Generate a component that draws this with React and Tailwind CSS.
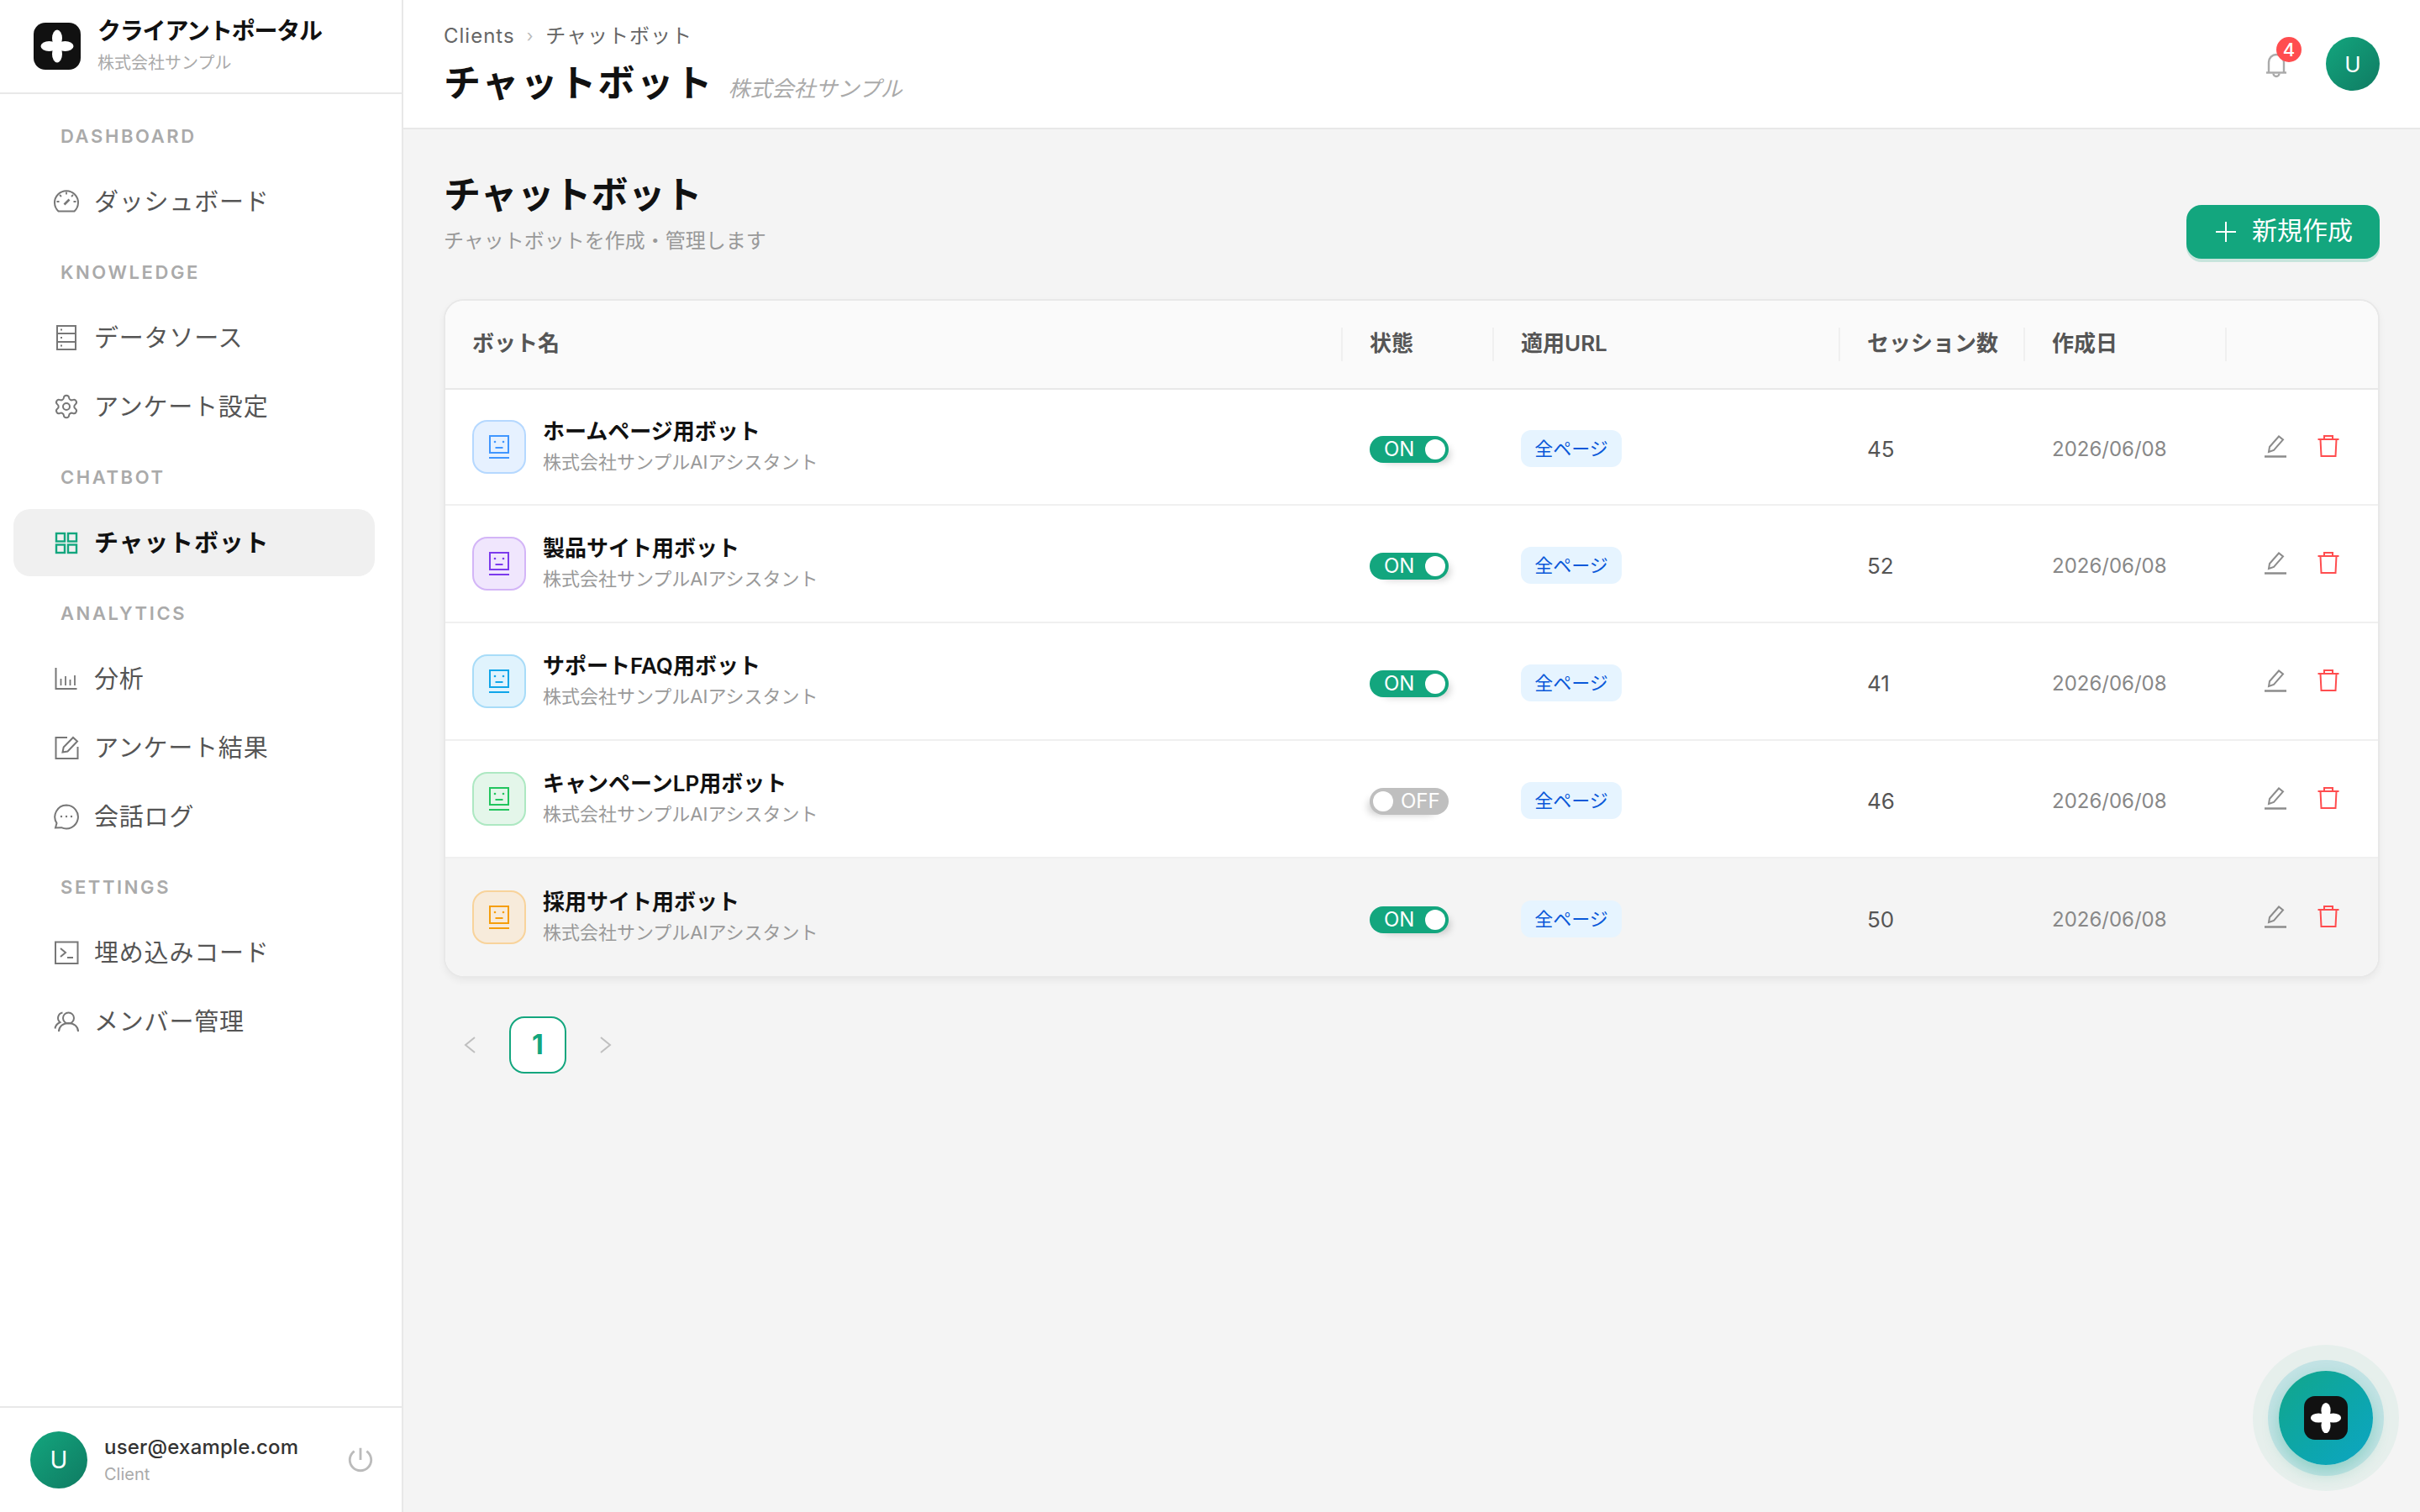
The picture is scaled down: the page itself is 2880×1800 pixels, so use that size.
import React from 'react';
import { Settings } from 'lucide-react';
import { RiShutDownLine } from 'react-icons/ri';

const Logo = ({ size = 56 }) => (
	<div
		className={`flex items-center justify-center bg-[#111111] ${size === 56 ? 'w-[56px] h-[56px] rounded-[14px]' : 'w-[52px] h-[52px] rounded-[13px]'}`}
	>
		<svg viewBox="0 0 56 56" className="w-full h-full blur-[0.5px]">
			<g fill="#ffffff">
				<ellipse cx="28" cy="18.500" rx="6" ry="10" />
				<ellipse cx="28" cy="37.500" rx="6" ry="10" />
				<ellipse cx="18.500" cy="28" rx="10" ry="6" />
				<ellipse cx="37.500" cy="28" rx="10" ry="6" />
				<rect x="23" y="23" width="10" height="10" />
			</g>
		</svg>
	</div>
);

const icon = 'w-[32px] h-[32px]';

const GaugeIcon = () => (
	<svg viewBox="0 0 32 32" className={icon} fill="none" stroke="currentColor" strokeWidth="2">
		<path d="M6.500 27.500a14 14 0 1 1 19 0z" />
		<path d="M16 4.500v3M8 8l2 2M24 8l-2 2M4.500 16h3M27.500 16h-3" strokeWidth="1.800" />
		<path d="M13.500 19.500l6-6" strokeWidth="2.600" />
	</svg>
);

const DataIcon = () => (
	<svg viewBox="0 0 32 32" className={icon} fill="none" stroke="currentColor" strokeWidth="2">
		<rect x="5" y="2" width="22" height="28" />
		<path d="M5 11h22M5 21h22" />
		<path d="M9 6.500h2M9 16h2M9 25.500h2" />
	</svg>
);

const GridIcon = () => (
	<svg viewBox="0 0 32 32" className={icon} fill="none" stroke="currentColor" strokeWidth="2.400">
		<rect x="4" y="5" width="10" height="9.500" />
		<rect x="18" y="5" width="10" height="9.500" />
		<rect x="4" y="18.500" width="10" height="9.500" />
		<rect x="18" y="18.500" width="10" height="9.500" />
	</svg>
);

const ChartIcon = () => (
	<svg viewBox="0 0 32 32" className={icon} fill="none" stroke="currentColor" strokeWidth="2">
		<path d="M3.500 3v25h25" />
		<path d="M9.500 24v-8M15 24v-11M20.500 24v-7M26 24v-12" strokeWidth="1.800" />
	</svg>
);

const EditBoxIcon = () => (
	<svg viewBox="0 0 32 32" className={icon} fill="none" stroke="currentColor" strokeWidth="2">
		<path d="M17 4H3.500v25h26V15" />
		<path d="M11.500 21.500l1.200-6L24 4l5 4.500L17.500 20.500z" />
	</svg>
);

const ChatIcon = () => (
	<svg viewBox="0 0 32 32" className={icon} fill="none" stroke="currentColor" strokeWidth="2">
		<path d="M16 2.500a14 14 0 1 1-6 26.700L3 29.500l1.500-5.500A14 14 0 0 1 16 2.500z" />
		<circle cx="10" cy="16" r="1.200" fill="currentColor" stroke="none" />
		<circle cx="16" cy="16" r="1.200" fill="currentColor" stroke="none" />
		<circle cx="22" cy="16" r="1.200" fill="currentColor" stroke="none" />
	</svg>
);

const TerminalIcon = () => (
	<svg viewBox="0 0 32 32" className={icon} fill="none" stroke="currentColor" strokeWidth="2">
		<rect x="3" y="3.500" width="26.500" height="25.500" />
		<path d="M9 11l6 5-6 5" />
		<path d="M17 22h7" />
	</svg>
);

const MembersIcon = () => (
	<svg viewBox="0 0 32 32" className={icon} fill="none" stroke="currentColor" strokeWidth="2">
		<circle cx="18.500" cy="12" r="6.500" />
		<path d="M7 28c0-6 5-10 11.500-10S30 22 30 28" />
		<path d="M11.500 5.500a6.500 6.500 0 0 0-3 11.500C5 18.500 3 21 2.500 24.500" />
	</svg>
);

const BellIcon = () => (
	<svg viewBox="0 0 26 32" className="w-[26px] h-[32px]" fill="none" stroke="#aaaaaa" strokeWidth="2.400">
		<path d="M4 25V13a9 9 0 0 1 18 0v12" />
		<path d="M1 25.500h24" />
		<path d="M9.500 26.500a3.500 3.500 0 0 0 7 0" />
	</svg>
);

const BotIcon = ({ color }) => (
	<svg viewBox="0 0 24 28" className="w-[24px] h-[28px]" fill="none" stroke={color} strokeWidth="2">
		<rect x="1" y="1" width="22" height="20" />
		<circle cx="7" cy="8" r="1.300" fill={color} stroke="none" />
		<circle cx="17" cy="8" r="1.300" fill={color} stroke="none" />
		<path d="M7.500 15h9" />
		<path d="M0 27h24" />
	</svg>
);

const EditIcon = () => (
	<svg viewBox="0 0 28 28" className="w-[28px] h-[28px]" fill="none" stroke="#8c8c8c" strokeWidth="2">
		<path d="M6 21l1-6L18 2.500l5 4L12 19z" />
		<path d="M1 26.500h26" strokeWidth="2.500" />
	</svg>
);

const TrashIcon = () => (
	<svg viewBox="0 0 28 28" className="w-[28px] h-[28px]" fill="none" stroke="#ff4d4f" strokeWidth="2">
		<path d="M1.500 6h25" />
		<path d="M9 6V2h10v4" />
		<path d="M4.500 6l1 20h17l1-20" />
	</svg>
);

const Chevron = ({ dir }) => (
	<svg viewBox="0 0 14 20" className="w-[14px] h-[20px]" fill="none" stroke="#bfbfbf" strokeWidth="2">
		<path d={dir === 'left' ? 'M13 1L2 10l11 9' : 'M1 1l11 9-11 9'} />
	</svg>
);

const nav = [
	{ label: 'DASHBOARD', items: [{ name: 'ダッシュボード', icon: <GaugeIcon /> }] },
	{
		label: 'KNOWLEDGE',
		items: [
			{ name: 'データソース', icon: <DataIcon /> },
			{ name: 'アンケート設定', icon: <Settings size={32} strokeWidth={1.5} /> },
		],
	},
	{ label: 'CHATBOT', items: [{ name: 'チャットボット', icon: <GridIcon />, active: true }] },
	{
		label: 'ANALYTICS',
		items: [
			{ name: '分析', icon: <ChartIcon /> },
			{ name: 'アンケート結果', icon: <EditBoxIcon /> },
			{ name: '会話ログ', icon: <ChatIcon /> },
		],
	},
	{
		label: 'SETTINGS',
		items: [
			{ name: '埋め込みコード', icon: <TerminalIcon /> },
			{ name: 'メンバー管理', icon: <MembersIcon /> },
		],
	},
];

const bots = [
	{ name: 'ホームページ用ボット', sessions: 45, on: true, box: 'bg-[#e6f1ff] border-[#b5d8ff]', color: '#4096ff', height: 'h-[138px]' },
	{ name: '製品サイト用ボット', sessions: 52, on: true, box: 'bg-[#f0e6fd] border-[#d3b5f7]', color: '#7c3aed', height: 'h-[140px]' },
	{ name: 'サポートFAQ用ボット', sessions: 41, on: true, box: 'bg-[#e0f3fd] border-[#a8dcf8]', color: '#0ea5e9', height: 'h-[140px]' },
	{ name: 'キャンペーンLP用ボット', sessions: 46, on: false, box: 'bg-[#e4f6ea] border-[#ade8c2]', color: '#22c55e', height: 'h-[140px]' },
	{ name: '採用サイト用ボット', sessions: 50, on: true, box: 'bg-[#f7ebdb] border-[#f8d39b]', color: '#f59e0b', height: 'h-[140px]', hover: true },
];

const columns = 'grid grid-cols-[1068px_180px_412px_220px_240px_1fr]';

const Toggle = ({ on }) =>
	on ? (
		<div className="w-[94px] h-[32px] rounded-full bg-[#13a67e] flex items-center justify-between pl-[17px] pr-[4px] shadow-[8px_6px_10px_-6px_rgba(0,0,0,0.2)]">
			<span className="text-[24px] leading-none text-white">ON</span>
			<span className="w-[24px] h-[24px] rounded-full bg-white" />
		</div>
	) : (
		<div className="w-[94px] h-[32px] rounded-full bg-[#bfbfbf] flex items-center pl-[4px] shadow-[-8px_6px_10px_-6px_rgba(0,0,0,0.2)]">
			<span className="w-[24px] h-[24px] rounded-full bg-white" />
			<span className="ml-[9px] text-[24px] leading-none text-white">OFF</span>
		</div>
	);

const Sidebar = () => (
	<aside className="w-[480px] shrink-0 h-full bg-white border-r-2 border-[#e8e8e8] flex flex-col">
		<div className="h-[112px] shrink-0 border-b-2 border-[#e8e8e8] flex items-center pl-[40px] gap-[20px]">
			<Logo />
			<div className="flex flex-col">
				<span className="text-[28px] leading-[36px] font-semibold tracking-[-1.2px] text-[#111111]">クライアントポータル</span>
				<span className="mt-[4px] text-[20px] leading-[32px] text-[#aaaaaa]">株式会社サンプル</span>
			</div>
		</div>
		<nav className="flex-1 pt-[8px] flex flex-col">
			{nav.map((section) => (
				<div key={section.label}>
					<div className="h-[80px] pt-[22px] pl-[72px] text-[22px] leading-[40px] font-semibold tracking-[2.6px] text-[#aaaaaa]">
						{section.label}
					</div>
					{section.items.map((item) => (
						<div
							key={item.name}
							className={`ml-[16px] w-[430px] h-[80px] mb-[2px] rounded-[20px] flex items-center pl-[46px] gap-[16px] ${item.active ? 'bg-[#f0f0f0]' : ''}`}
						>
							<span className={`w-[34px] flex justify-center ${item.active ? 'text-[#13a67e]' : 'text-[#777777]'}`}>
								{item.icon}
							</span>
							<span
								className={`pt-[2px] text-[29px] tracking-[0.8px] ${item.active ? 'font-bold text-[#111111]' : 'text-[#555555]'}`}
							>
								{item.name}
							</span>
						</div>
					))}
				</div>
			))}
		</nav>
		<div className="h-[126px] shrink-0 border-t-2 border-[#e8e8e8] flex items-center pl-[36px] pr-[32px]">
			<div className="w-[68px] h-[68px] rounded-full bg-gradient-to-br from-[#13a67e] to-[#0f7b62] flex items-center justify-center text-white text-[28px]">
				U
			</div>
			<div className="ml-[20px] flex-1 flex flex-col -mt-[1px]">
				<span className="text-[24px] leading-[34px] font-medium tracking-[0.2px] text-[#333333]">user@example.com</span>
				<span className="text-[20px] leading-[30px] text-[#aaaaaa]">Client</span>
			</div>
			<RiShutDownLine size={34} className="text-[#bbbbbb]" />
		</div>
	</aside>
);

const Header = () => (
	<header className="h-[154px] shrink-0 bg-white border-b-2 border-[#e8e8e8] flex items-center justify-between pl-[48px] pr-[48px]">
		<div className="flex flex-col">
			<div className="flex items-center text-[24px] leading-[36px] tracking-[1px] text-[#666666]">
				<span>Clients</span>
				<span className="mx-[14px] text-[#bbbbbb] text-[20px]">›</span>
				<span>チャットボット</span>
			</div>
			<div className="flex items-end mt-[10px]">
				<h1 className="text-[44px] leading-[56px] font-bold tracking-[2px] text-[#111111]">チャットボット</h1>
				<span className="ml-[17px] text-[26px] leading-[42px] italic text-[#aaaaaa]">株式会社サンプル</span>
			</div>
		</div>
		<div className="flex items-center">
			<div className="relative mr-[46px] mt-[2px]">
				<BellIcon />
				<span className="absolute -top-[17px] left-[13px] w-[30px] h-[30px] rounded-full bg-[#ff4d4f] text-white text-[22px] font-medium flex items-center justify-center">
					4
				</span>
			</div>
			<div className="w-[64px] h-[64px] rounded-full bg-gradient-to-br from-[#13a67e] to-[#0f7b62] flex items-center justify-center text-white text-[26px]">
				U
			</div>
		</div>
	</header>
);

const BotTable = () => (
	<div className="w-[2304px] rounded-[24px] border-2 border-[#e8e8e8] bg-white overflow-hidden shadow-[0_4px_8px_rgba(0,0,0,0.05)]">
		<div className={`${columns} h-[106px] bg-[#fafafa] border-b-2 border-[#e8e8e8] items-center text-[26px] font-semibold text-[#555555]`}>
			{['ボット名', '状態', '適用URL', 'セッション数', '作成日', ''].map((title, i) => (
				<div key={i} className={`h-[40px] flex items-center pl-[32px] pb-[3px] whitespace-nowrap ${i < 5 ? 'border-r-2 border-[#f0f0f0]' : ''}`}>
					{title}
				</div>
			))}
		</div>
		{bots.map((bot, i) => (
			<div
				key={bot.name}
				className={`${columns} ${bot.height} items-center ${i < 4 ? 'border-b-2 border-[#f0f0f0]' : ''} ${bot.hover ? 'bg-[#f4f4f4]' : 'bg-white'}`}
			>
				<div className="flex items-center pl-[32px] gap-[20px]">
					<div className={`w-[64px] h-[64px] rounded-[18px] border-2 flex items-center justify-center ${bot.box}`}>
						<BotIcon color={bot.color} />
					</div>
					<div className="flex flex-col">
						<span className="text-[26px] leading-[36px] font-semibold text-[#111111]">{bot.name}</span>
						<span className="text-[22px] leading-[36px] text-[#999999]">株式会社サンプルAIアシスタント</span>
					</div>
				</div>
				<div className="pl-[32px] pt-[6px]">
					<Toggle on={bot.on} />
				</div>
				<div className="pl-[32px] pt-[4px]">
					<span className="inline-flex items-center justify-center w-[120px] h-[44px] rounded-[12px] bg-[#e6f4ff] text-[#0958d9] text-[22px]">
						全ページ
					</span>
				</div>
				<div className="pl-[32px] pt-[4px] text-[26px] text-[#555555]">{bot.sessions}</div>
				<div className="pl-[32px] pt-[6px] text-[24px] text-[#888888]">2026/06/08</div>
				<div className="pl-[44px] flex items-center gap-[35px] -mt-[2px]">
					<EditIcon />
					<TrashIcon />
				</div>
			</div>
		))}
	</div>
);

const Pagination = () => (
	<div className="flex items-center mt-[46px] pl-[24px]">
		<Chevron dir="left" />
		<div className="ml-[40px] w-[68px] h-[68px] rounded-[18px] border-2 border-[#13a67e] bg-white flex items-center justify-center text-[32px] font-bold text-[#13a67e]">
			1
		</div>
		<div className="ml-[40px]">
			<Chevron dir="right" />
		</div>
	</div>
);

export default function App() {
	return (
		<div className="relative w-[2880px] h-[1800px] flex bg-[#f4f4f4] overflow-hidden font-['Inter','Noto_Sans_CJK_JP',sans-serif]">
			<Sidebar />
			<main className="flex-1 flex flex-col">
				<Header />
				<div className="flex-1 pl-[48px] pr-[48px]">
					<div className="h-[202px] flex items-start justify-between">
						<div className="pt-[48px]">
							<h2 className="text-[44px] leading-[60px] font-bold text-[#111111]">チャットボット</h2>
							<p className="mt-[7px] text-[24px] leading-[36px] text-[#999999]">チャットボットを作成・管理します</p>
						</div>
						<button className="mt-[90px] w-[230px] h-[64px] rounded-[18px] bg-[#13a67e] shadow-[0_4px_0_rgba(19,166,126,0.2)] flex items-center justify-center gap-[19px] text-white text-[30px] pl-[3px]">
							<svg viewBox="0 0 24 24" className="w-[24px] h-[24px]" fill="none" stroke="#ffffff" strokeWidth="2">
								<path d="M12 0v24M0 12h24" />
							</svg>
							<span className="-mt-[4px]">新規作成</span>
						</button>
					</div>
					<BotTable />
					<Pagination />
				</div>
			</main>
			<div className="absolute left-[2712px] top-[1632px] w-[112px] h-[112px] rounded-full bg-gradient-to-br from-[#13a68a] to-[#0ea5c4] flex items-center justify-center shadow-[0_8px_20px_rgba(19,166,126,0.3),0_0_0_13px_rgba(14,165,192,0.16),0_0_0_31px_rgba(19,166,126,0.06)]">
				<Logo size={52} />
			</div>
		</div>
	);
}
